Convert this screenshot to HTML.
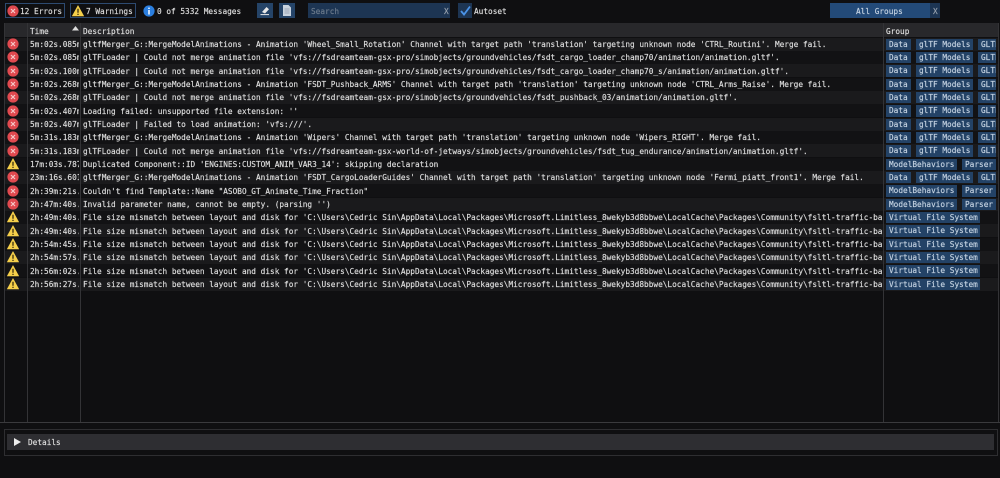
<!DOCTYPE html>
<html><head><meta charset="utf-8"><style>
*{box-sizing:border-box}
html,body{margin:0;padding:0;background:#0f0f11;width:1000px;height:478px;overflow:hidden}
body{position:relative;font:7.77px/13px "DejaVu Sans Mono","Liberation Mono",monospace;color:#dfdfdf;-webkit-text-stroke:.15px currentColor}
.a{position:absolute;white-space:pre}
.r{position:absolute;left:4px;width:994px;height:13.33px;overflow:hidden}
.r.o{background:#1a1a1c}
.r.e{background:#121214}
.ic{position:absolute;left:3px;top:0.5px;width:12px;height:12px}
.t{position:absolute;left:26px;top:.4px;width:49px;overflow:hidden;white-space:pre}
.d{position:absolute;left:79px;top:.4px;width:799px;overflow:hidden;white-space:pre}
.g{position:absolute;left:880px;top:0;width:112px;height:13.33px;overflow:hidden}
.g b{position:absolute;top:1px;height:11.5px;background:#234266;color:#c5d3e2;line-height:11.5px;padding-left:3px;white-space:pre;font-weight:normal}
.v{position:absolute;width:1px;background:#333336}
.btn{position:absolute;border:1px solid #2d4a70;height:15px;top:3px}
.field{position:absolute;background:#1d3553;top:3px;height:15px}
</style></head><body>
<svg width="0" height="0" style="position:absolute"><defs>
<symbol id="E" viewBox="0 0 12 12"><circle cx="6" cy="6" r="5.6" fill="#e0494f"/><path d="M4 4L8 8M8 4L4 8" stroke="#f5c9c9" stroke-width="1.2"/></symbol>
<symbol id="W" viewBox="0 0 12 12"><path d="M6 .6L11.7 11H.3Z" fill="#f5cf4a" stroke="#f5cf4a" stroke-width=".6" stroke-linejoin="round"/><path d="M6 3.8V7.8M6 8.8V10" stroke="#2a2208" stroke-width="1.2"/></symbol>
</defs></svg>

<div class="btn" style="left:5px;width:60px"></div>
<svg class="a" style="left:7px;top:5px" width="12" height="12"><use href="#E"/></svg>
<div class="a" style="left:20px;top:5px">12 Errors</div>
<div class="btn" style="left:70px;width:66px"></div>
<svg class="a" style="left:72px;top:5px" width="12" height="12"><use href="#W"/></svg>
<div class="a" style="left:86px;top:5px">7 Warnings</div>
<svg class="a" style="left:143px;top:5px" width="12" height="12"><circle cx="6" cy="6" r="5.6" fill="#2b7fe0"/><path d="M6 2.6V4M6 5V9.5" stroke="#fff" stroke-width="1.5"/></svg>
<div class="a" style="left:157px;top:5px">0 of 5332 Messages</div>
<div class="field" style="left:257px;top:3px;width:16px;height:15px;background:#254468"></div>
<svg class="a" style="left:259px;top:5px" width="12" height="11"><path d="M3 7L7.5 2L10 4.2L6 8.5Z" fill="#e8e8e8"/><path d="M1.5 9.6H10" stroke="#e8e8e8" stroke-width="1"/></svg>
<div class="field" style="left:279px;top:3px;width:16px;height:15px;background:#254468"></div>
<svg class="a" style="left:282px;top:4px" width="10" height="13"><path d="M1 1H6.5L9 3.5V12H1Z" fill="#c9d3de"/><path d="M2.5 5H7.5M2.5 7H7.5M2.5 9H7.5" stroke="#8a98a8" stroke-width=".7"/></svg>
<div class="field" style="left:308px;width:142px"></div>
<div class="a" style="left:311px;top:5px;color:#6d7c8d">Search</div>
<div class="a" style="left:444px;top:5px;color:#9aa4b0">X</div>
<div class="field" style="left:458px;width:14px"></div>
<svg class="a" style="left:459px;top:4px" width="13" height="13"><path d="M2 7L5 10.5L11 2.5" fill="none" stroke="#4a93e8" stroke-width="1.8"/></svg>
<div class="a" style="left:474px;top:5px">Autoset</div>
<div class="field" style="left:830px;width:100px;background:#234a78"></div>
<div class="a" style="left:856px;top:5px;color:#c5d3e2">All Groups</div>
<div class="field" style="left:930px;width:10px"></div>
<div class="a" style="left:933px;top:5px;color:#9aa4b0">X</div>

<div class="a" style="left:4px;top:23px;width:994px;height:14px;background:#28282b"></div>
<div class="a" style="left:30px;top:25px">Time</div>
<svg class="a" style="left:72px;top:26px" width="7" height="5"><path d="M3.5 0L7 4.5H0Z" fill="#dcdcdc"/></svg>
<div class="a" style="left:83px;top:25px">Description</div>
<div class="a" style="left:886px;top:25px">Group</div>

<div class="r o" style="top:37.5px"><svg class="ic"><use href="#E"/></svg><div class="t">5m:02s.085ms</div><div class="d">gltfMerger_G::MergeModelAnimations - Animation 'Wheel_Small_Rotation' Channel with target path 'translation' targeting unknown node 'CTRL_Routini'. Merge fail.</div><div class="g"><b style="left:2px;width:25px">Data</b><b style="left:32px;width:57px">glTF Models</b><b style="left:94px;width:30px">GLTF</b></div></div>
<div class="r e" style="top:50.83px"><svg class="ic"><use href="#E"/></svg><div class="t">5m:02s.085ms</div><div class="d">glTFLoader | Could not merge animation file 'vfs://fsdreamteam-gsx-pro/simobjects/groundvehicles/fsdt_cargo_loader_champ70/animation/animation.gltf'.</div><div class="g"><b style="left:2px;width:25px">Data</b><b style="left:32px;width:57px">glTF Models</b><b style="left:94px;width:30px">GLTF</b></div></div>
<div class="r o" style="top:64.17px"><svg class="ic"><use href="#E"/></svg><div class="t">5m:02s.100ms</div><div class="d">glTFLoader | Could not merge animation file 'vfs://fsdreamteam-gsx-pro/simobjects/groundvehicles/fsdt_cargo_loader_champ70_s/animation/animation.gltf'.</div><div class="g"><b style="left:2px;width:25px">Data</b><b style="left:32px;width:57px">glTF Models</b><b style="left:94px;width:30px">GLTF</b></div></div>
<div class="r e" style="top:77.5px"><svg class="ic"><use href="#E"/></svg><div class="t">5m:02s.268ms</div><div class="d">gltfMerger_G::MergeModelAnimations - Animation 'FSDT_Pushback_ARMS' Channel with target path 'translation' targeting unknown node 'CTRL_Arms_Raise'. Merge fail.</div><div class="g"><b style="left:2px;width:25px">Data</b><b style="left:32px;width:57px">glTF Models</b><b style="left:94px;width:30px">GLTF</b></div></div>
<div class="r o" style="top:90.83px"><svg class="ic"><use href="#E"/></svg><div class="t">5m:02s.268ms</div><div class="d">glTFLoader | Could not merge animation file 'vfs://fsdreamteam-gsx-pro/simobjects/groundvehicles/fsdt_pushback_03/animation/animation.gltf'.</div><div class="g"><b style="left:2px;width:25px">Data</b><b style="left:32px;width:57px">glTF Models</b><b style="left:94px;width:30px">GLTF</b></div></div>
<div class="r e" style="top:104.17px"><svg class="ic"><use href="#E"/></svg><div class="t">5m:02s.407ms</div><div class="d">Loading failed: unsupported file extension: ''</div><div class="g"><b style="left:2px;width:25px">Data</b><b style="left:32px;width:57px">glTF Models</b><b style="left:94px;width:30px">GLTF</b></div></div>
<div class="r o" style="top:117.5px"><svg class="ic"><use href="#E"/></svg><div class="t">5m:02s.407ms</div><div class="d">glTFLoader | Failed to load animation: 'vfs:///'.</div><div class="g"><b style="left:2px;width:25px">Data</b><b style="left:32px;width:57px">glTF Models</b><b style="left:94px;width:30px">GLTF</b></div></div>
<div class="r e" style="top:130.83px"><svg class="ic"><use href="#E"/></svg><div class="t">5m:31s.183ms</div><div class="d">gltfMerger_G::MergeModelAnimations - Animation 'Wipers' Channel with target path 'translation' targeting unknown node 'Wipers_RIGHT'. Merge fail.</div><div class="g"><b style="left:2px;width:25px">Data</b><b style="left:32px;width:57px">glTF Models</b><b style="left:94px;width:30px">GLTF</b></div></div>
<div class="r o" style="top:144.17px"><svg class="ic"><use href="#E"/></svg><div class="t">5m:31s.183ms</div><div class="d">glTFLoader | Could not merge animation file 'vfs://fsdreamteam-gsx-world-of-jetways/simobjects/groundvehicles/fsdt_tug_endurance/animation/animation.gltf'.</div><div class="g"><b style="left:2px;width:25px">Data</b><b style="left:32px;width:57px">glTF Models</b><b style="left:94px;width:30px">GLTF</b></div></div>
<div class="r e" style="top:157.5px"><svg class="ic"><use href="#W"/></svg><div class="t">17m:03s.787ms</div><div class="d">Duplicated Component::ID 'ENGINES:CUSTOM_ANIM_VAR3_14': skipping declaration</div><div class="g"><b style="left:2px;width:71px">ModelBehaviors</b><b style="left:78px;width:40px">Parser</b></div></div>
<div class="r o" style="top:170.83px"><svg class="ic"><use href="#E"/></svg><div class="t">23m:16s.601ms</div><div class="d">gltfMerger_G::MergeModelAnimations - Animation 'FSDT_CargoLoaderGuides' Channel with target path 'translation' targeting unknown node 'Fermi_piatt_front1'. Merge fail.</div><div class="g"><b style="left:2px;width:25px">Data</b><b style="left:32px;width:57px">glTF Models</b><b style="left:94px;width:30px">GLTF</b></div></div>
<div class="r e" style="top:184.17px"><svg class="ic"><use href="#E"/></svg><div class="t">2h:39m:21s.123</div><div class="d">Couldn't find Template::Name "ASOBO_GT_Animate_Time_Fraction"</div><div class="g"><b style="left:2px;width:71px">ModelBehaviors</b><b style="left:78px;width:40px">Parser</b></div></div>
<div class="r o" style="top:197.5px"><svg class="ic"><use href="#E"/></svg><div class="t">2h:47m:40s.123</div><div class="d">Invalid parameter name, cannot be empty. (parsing '')</div><div class="g"><b style="left:2px;width:71px">ModelBehaviors</b><b style="left:78px;width:40px">Parser</b></div></div>
<div class="r e" style="top:210.83px"><svg class="ic"><use href="#W"/></svg><div class="t">2h:49m:40s.123</div><div class="d">File size mismatch between layout and disk for 'C:\Users\Cedric Sin\AppData\Local\Packages\Microsoft.Limitless_8wekyb3d8bbwe\LocalCache\Packages\Community\fsltl-traffic-base</div><div class="g"><b style="left:2px;width:94px">Virtual File System</b></div></div>
<div class="r o" style="top:224.17px"><svg class="ic"><use href="#W"/></svg><div class="t">2h:49m:40s.123</div><div class="d">File size mismatch between layout and disk for 'C:\Users\Cedric Sin\AppData\Local\Packages\Microsoft.Limitless_8wekyb3d8bbwe\LocalCache\Packages\Community\fsltl-traffic-base</div><div class="g"><b style="left:2px;width:94px">Virtual File System</b></div></div>
<div class="r e" style="top:237.5px"><svg class="ic"><use href="#W"/></svg><div class="t">2h:54m:45s.123</div><div class="d">File size mismatch between layout and disk for 'C:\Users\Cedric Sin\AppData\Local\Packages\Microsoft.Limitless_8wekyb3d8bbwe\LocalCache\Packages\Community\fsltl-traffic-base</div><div class="g"><b style="left:2px;width:94px">Virtual File System</b></div></div>
<div class="r o" style="top:250.83px"><svg class="ic"><use href="#W"/></svg><div class="t">2h:54m:57s.123</div><div class="d">File size mismatch between layout and disk for 'C:\Users\Cedric Sin\AppData\Local\Packages\Microsoft.Limitless_8wekyb3d8bbwe\LocalCache\Packages\Community\fsltl-traffic-base</div><div class="g"><b style="left:2px;width:94px">Virtual File System</b></div></div>
<div class="r e" style="top:264.17px"><svg class="ic"><use href="#W"/></svg><div class="t">2h:56m:02s.123</div><div class="d">File size mismatch between layout and disk for 'C:\Users\Cedric Sin\AppData\Local\Packages\Microsoft.Limitless_8wekyb3d8bbwe\LocalCache\Packages\Community\fsltl-traffic-base</div><div class="g"><b style="left:2px;width:94px">Virtual File System</b></div></div>
<div class="r o" style="top:277.5px"><svg class="ic"><use href="#W"/></svg><div class="t">2h:56m:27s.123</div><div class="d">File size mismatch between layout and disk for 'C:\Users\Cedric Sin\AppData\Local\Packages\Microsoft.Limitless_8wekyb3d8bbwe\LocalCache\Packages\Community\fsltl-traffic-base</div><div class="g"><b style="left:2px;width:94px">Virtual File System</b></div></div>

<div class="v" style="left:4px;top:23px;height:400px"></div>
<div class="v" style="left:27px;top:23px;height:399px"></div>
<div class="v" style="left:80px;top:23px;height:399px"></div>
<div class="v" style="left:883px;top:23px;height:399px"></div>
<div class="v" style="left:998px;top:23px;height:400px"></div>
<div class="a" style="left:0;top:422px;width:1000px;height:1px;background:#3a3a3d"></div>
<div class="a" style="left:4px;top:429px;width:994px;height:27px;border:1px solid #2e2e31"></div>
<div class="a" style="left:7px;top:434px;width:987px;height:16px;background:#2e2e32"></div>
<svg class="a" style="left:13px;top:438px" width="9" height="8"><path d="M1 0L8 4L1 8Z" fill="#eee"/></svg>
<div class="a" style="left:28px;top:436px">Details</div>
</body></html>
